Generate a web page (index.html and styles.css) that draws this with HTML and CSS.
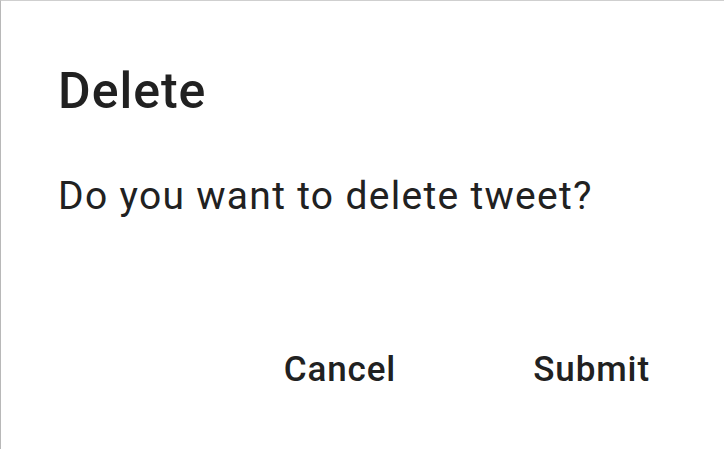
FILE: index.html
```html
<!DOCTYPE html>
<html>
<head>
<meta charset="utf-8">
<link rel="stylesheet" href="styles.css">
</head>
<body>
<div class="dialog">
  <h1 class="title">Delete</h1>
  <p class="message">Do you want to delete tweet?</p>
  <div class="actions">
    <button class="btn">Cancel</button>
    <button class="btn">Submit</button>
  </div>
</div>
</body>
</html>
```

FILE: styles.css
```css
html, body {
  margin: 0;
  padding: 0;
  background: #fff;
}
.dialog {
  box-sizing: border-box;
  width: 724px;
  height: 449px;
  border-top: 1px solid #cfcfcf;
  border-left: 1px solid #b8b8b8;
  font-family: Roboto, "Liberation Sans", sans-serif;
  color: #212121;
  display: flex;
  flex-direction: column;
  padding: 0 0 0 57px;
}
.title {
  margin: 0;
  padding-top: 60px;
  font-size: 50px;
  font-weight: 500;
  letter-spacing: 1px;
  line-height: 60px;
}
.message {
  margin: 0;
  padding-top: 51px;
  font-size: 39px;
  font-weight: 400;
  letter-spacing: 1.3px;
  line-height: 48px;
}
.actions {
  display: flex;
  justify-content: flex-end;
  gap: 137px;
  padding-right: 74px;
  margin-top: 128px;
}
.btn {
  border: none;
  background: none;
  padding: 0;
  font-family: inherit;
  font-size: 35px;
  font-weight: 500;
  letter-spacing: 0.9px;
  color: #212121;
  line-height: 44px;
}
```
